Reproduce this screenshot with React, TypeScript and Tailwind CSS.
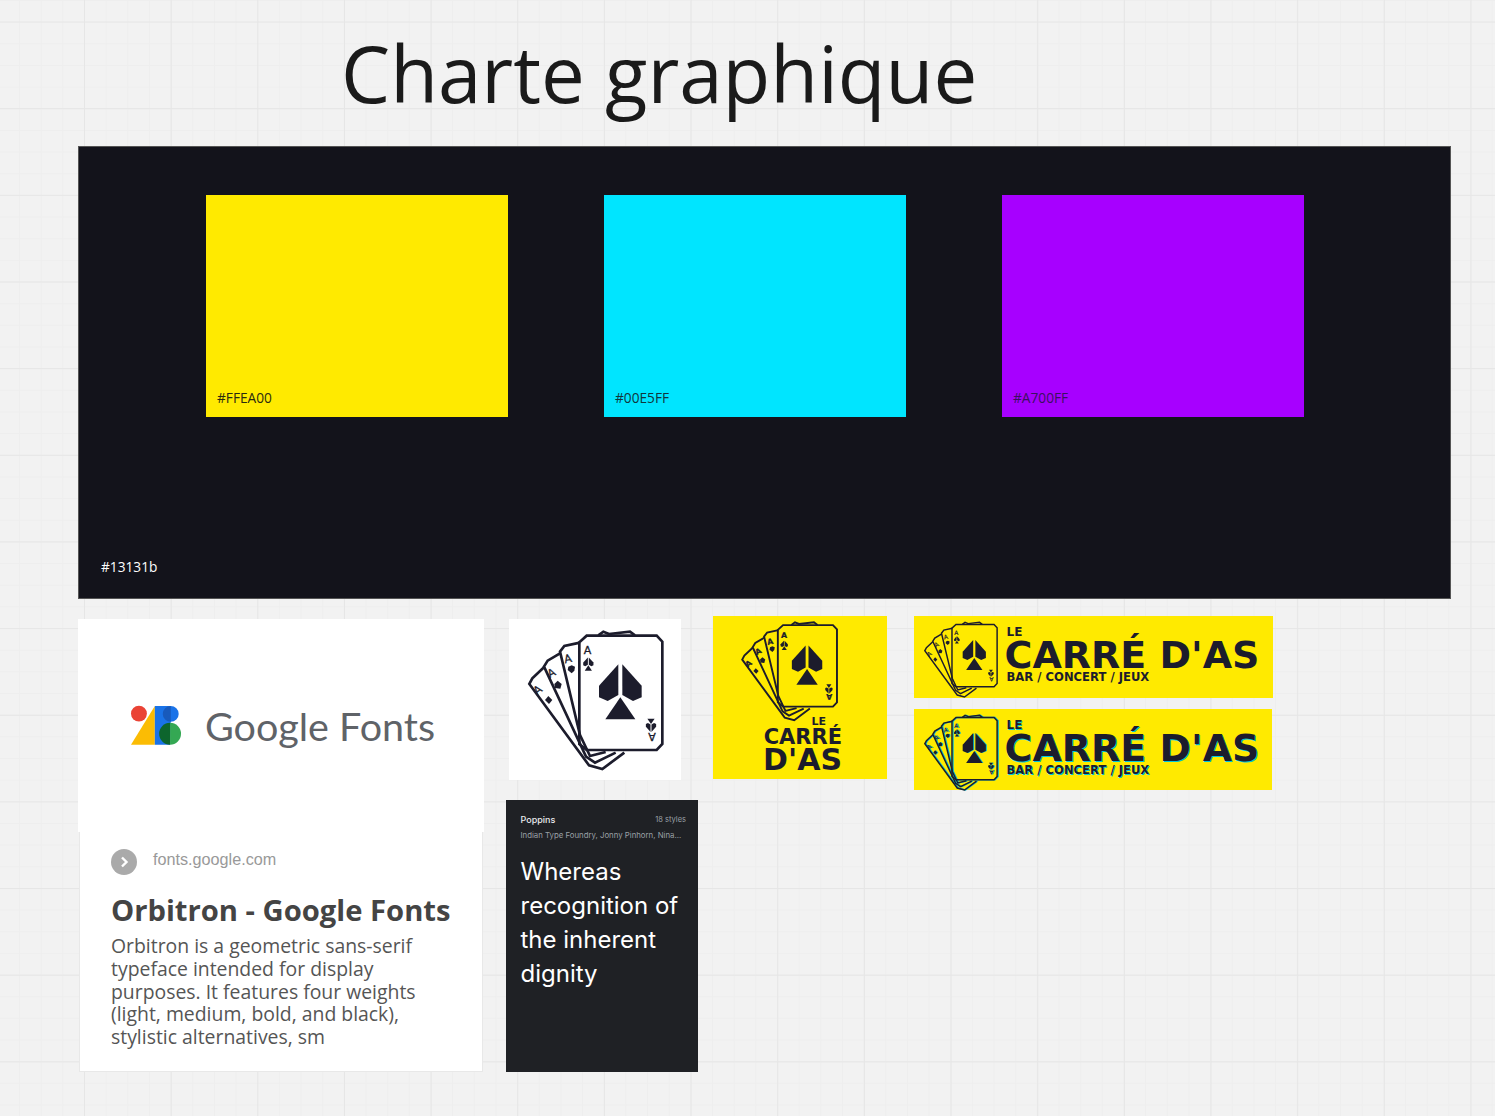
const swatches = [
  { hex: "#FFEA00", bg: "bg-[#ffea00]", text: "text-[#2a2a10]" },
  { hex: "#00E5FF", bg: "bg-[#00e5ff]", text: "text-[#10363c]" },
  { hex: "#A700FF", bg: "bg-[#a700ff]", text: "text-[#3a1060]" },
];

const fanLines = [
  "M195 68 L148 78 L135 95 L195 345 L225 408 L272 396",
  "M135 100 L98 122 L87 140 L213 410 L240 428 L302 398",
  "M87 142 L52 175 L43 192 L222 436 L262 447 L328 398",
  "M250 46 L265 35 L282 42 L345 35 L360 46",
];

function Spade({ color }: { color: string }) {
  return (
    <g fill={color}>
      <path d="M310 133 L252 197 L252 232 L278 243 L310 225 Z" />
      <path d="M322 133 L380 197 L380 232 L354 243 L322 225 Z" />
      <path d="M316 232 L361 298 L271 298 Z" />
    </g>
  );
}

function CardFan({ color, className }: { color: string; className: string }) {
  return (
    <svg viewBox="0 0 480 480" className={className}>
      <g fill="none" stroke={color} strokeWidth="8" strokeLinejoin="miter">
        {fanLines.map((d) => (
          <path key={d} d={d} />
        ))}
        <path d="M215 47 L425 47 L442 65 L442 372 L425 390 L215 390 L193 372 L193 67 Z" />
      </g>
      <Spade color={color} />
      {/* corner pips are the big spade scaled down */}
      <g transform="translate(220 132) scale(0.24) translate(-316 -215)">
        <Spade color={color} />
      </g>
      <g transform="translate(408 316) rotate(180) scale(0.24) translate(-316 -215)">
        <Spade color={color} />
      </g>
      <g fill={color}>
        <path d="M170 136 L180 140 L178 152 L170 160 L158 150 L160 140 Z" />
        <path d="M128 182 L140 192 L136 206 L120 204 L118 192 Z" />
        <path d="M100 228 L112 240 L102 252 L90 240 Z" />
      </g>
      <g fill={color} stroke={color} strokeWidth="1" fontFamily="'DejaVu Sans', sans-serif" fontSize="33">
        <text x="206" y="103">A</text>
        <text x="0" y="0" transform="translate(422 338) rotate(180)">A</text>
        <text x="0" y="0" transform="translate(150 130) rotate(-12)">A</text>
        <text x="0" y="0" transform="translate(104 174) rotate(-27)">A</text>
        <text x="0" y="0" transform="translate(66 226) rotate(-38)">A</text>
      </g>
    </svg>
  );
}

function GoogleFontsMark() {
  return (
    <svg viewBox="180 285 157 122" className="w-[52px] h-[41px] shrink-0">
      <circle cx="207" cy="310" r="24" fill="#ea4335" />
      <path d="M183 404 L255 287 L255 404 Z" fill="#fbbc04" />
      <path d="M255 287 L303 287 A24 24 0 0 1 303 335 L301 404 L255 404 Z" fill="#1a73e8" />
      <path d="M301 287 L303 287 L303 335 A24 24 0 0 1 303 287 Z" fill="#185abc" />
      <path d="M301 338 A33 33 0 0 1 301 404 Z" fill="#34a853" />
      <path d="M301 338 A33 33 0 0 0 301 404 Z" fill="#0d652d" />
    </svg>
  );
}

function Wordmark({ shadow }: { shadow?: boolean }) {
  const glow = shadow ? "[text-shadow:0.6px_0.6px_0_#00c8e0]" : "";
  return (
    <div className={`flex flex-col font-['DejaVu_Sans',sans-serif] font-bold text-[#1c1c2c] ${glow}`}>
      <span className="text-[12px] leading-[12px] ml-[2px]">LE</span>
      <span className="text-[38px] leading-[36px] whitespace-nowrap mt-[-1px]">CARRÉ D'AS</span>
      <span className="text-[11.6px] leading-[12px] ml-[2px] whitespace-nowrap mt-[-2px]">BAR / CONCERT / JEUX</span>
    </div>
  );
}

function Banner({ className, shadow }: { className: string; shadow?: boolean }) {
  return (
    <div className={`absolute bg-[#ffea00] flex items-center ${className}`}>
      <div className="relative w-[87px] h-[82px] ml-[3px] shrink-0">
        {shadow && <CardFan color="#00b8d0" className="absolute left-[0.7px] top-[0.7px] w-[87px] h-[87px]" />}
        <CardFan color="#1c1c2c" className="absolute left-0 top-0 w-[87px] h-[87px]" />
      </div>
      <div className="ml-[0.5px] mt-[-5px]">
        <Wordmark shadow={shadow} />
      </div>
    </div>
  );
}

export default function App() {
  return (
    <div className="relative w-[1495px] h-[1116px] overflow-hidden bg-[#f2f2f2] bg-[linear-gradient(to_right,#e6e6e6_1px,transparent_1px),linear-gradient(to_bottom,#e6e6e6_1px,transparent_1px),linear-gradient(to_right,#eeeeee_1px,transparent_1px),linear-gradient(to_bottom,#eeeeee_1px,transparent_1px)] bg-[size:86.67px_86.67px,86.67px_86.67px,21.67px_21.67px,21.67px_21.67px] bg-[position:84px_0,0_21.5px,19px_0,0_0]">
      <h1 className="absolute left-[341px] top-[19px] font-['Open_Sans',sans-serif] text-[78px] leading-[109px] text-[#1a1a1a] whitespace-nowrap">
        Charte graphique
      </h1>

      {/* colour board */}
      <section className="absolute left-[78px] top-[146px] w-[1373px] h-[453px] bg-[#13131b] border border-[#555] flex flex-col justify-between pl-[127px] pt-[48px] font-['Open_Sans',sans-serif]">
        <div className="flex gap-[96px]">
          {swatches.map((s) => (
            <div key={s.hex} className={`w-[302px] h-[222px] ${s.bg} flex items-end px-[11px] pb-[10px]`}>
              <span className={`text-[13.7px] leading-[18px] ${s.text}`}>{s.hex}</span>
            </div>
          ))}
        </div>
        <span className="ml-[-105px] mb-[22px] text-[13.7px] leading-[18px] text-white">#13131b</span>
      </section>

      {/* link preview */}
      <article className="absolute left-[79px] top-[619px] w-[404px] h-[453px] bg-white border border-[#e8e8e8] border-t-0 font-['Open_Sans',sans-serif]">
        <div className="h-[213px] mx-[-2px] bg-white flex items-center justify-center gap-[23px] pl-[3px]">
          <GoogleFontsMark />
          <span className="font-['Lato',sans-serif] text-[39.5px] leading-[44px] text-[#5f6368]">Google Fonts</span>
        </div>
        <div className="px-[31px]">
          <div className="flex items-center gap-[16px] pt-[17px]">
            <span className="w-[26px] h-[26px] rounded-full bg-[#aaaaaa] flex items-center justify-center">
              <svg viewBox="0 0 12 12" className="w-[12px] h-[12px]" fill="none" stroke="#fff" strokeWidth="2.4">
                <path d="M4 1.5 L8.5 6 L4 10.5" />
              </svg>
            </span>
            <span className="font-['Liberation_Sans',sans-serif] text-[16.2px] leading-[22px] text-[#999999] mt-[-7px]">fonts.google.com</span>
          </div>
          <h2 className="mt-[15px] text-[29.2px] leading-[40px] font-bold text-[#444444] whitespace-nowrap">Orbitron - Google Fonts</h2>
          <p className="mt-[5px] text-[19.4px] leading-[22.8px] text-[#555555] w-[340px]">
            Orbitron is a geometric sans-serif typeface intended for display purposes. It features four weights (light, medium, bold, and black), stylistic alternatives, sm
          </p>
        </div>
      </article>

      {/* cards icon on white */}
      <div className="absolute left-[509px] top-[619px] w-[172px] h-[161px] bg-white">
        <CardFan color="#1c1c2c" className="absolute left-[6px] top-[1px] w-[160px] h-[160px]" />
      </div>

      {/* square logo */}
      <div className="absolute left-[713px] top-[616px] w-[174px] h-[163px] bg-[#ffea00] font-['DejaVu_Sans',sans-serif] font-bold text-[#1c1c2c]">
        <CardFan color="#1c1c2c" className="absolute left-[19px] top-[-2px] w-[114px] h-[114px]" />
        <div className="absolute left-[51px] top-[101px] flex flex-col items-end w-[78px]">
          <span className="text-[11px] leading-[10px] mr-[16px]">LE</span>
          <span className="text-[21px] leading-[20px] whitespace-nowrap">CARRÉ</span>
          <span className="text-[30px] leading-[24px] mt-[1px] whitespace-nowrap">D'AS</span>
        </div>
      </div>

      <Banner className="left-[914px] top-[616px] w-[359px] h-[82px]" />
      <Banner className="left-[914px] top-[709px] w-[358px] h-[81px]" shadow />

      {/* font specimen */}
      <div className="absolute left-[506px] top-[800px] w-[192px] h-[272px] bg-[#1f2125] pl-[14.5px] pr-[12px] pt-[13px] font-['Inter',sans-serif]">
        <div className="flex items-center justify-between">
          <span className="text-[9px] leading-[14px] font-medium text-[#e8eaed]">Poppins</span>
          <span className="text-[7.5px] leading-[14px] text-[#9aa0a6]">18 styles</span>
        </div>
        <p className="text-[7.8px] leading-[12px] mt-[2px] text-[#9aa0a6] whitespace-nowrap">Indian Type Foundry, Jonny Pinhorn, Nina...</p>
        <p className="mt-[14px] text-[24px] leading-[34px] text-white">
          Whereas
          <br />
          recognition of
          <br />
          the inherent
          <br />
          dignity
        </p>
      </div>
    </div>
  );
}
